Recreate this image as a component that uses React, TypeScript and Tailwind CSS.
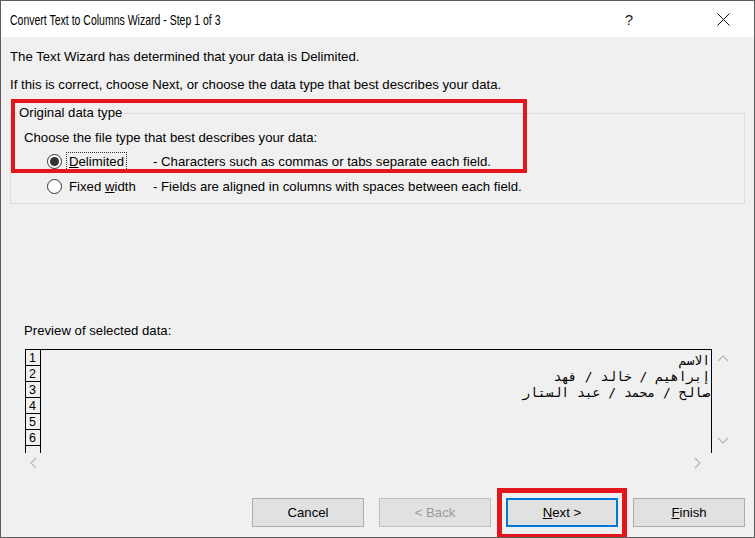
import React from 'react';

const font = { fontFamily: '"Liberation Sans", Arial, sans-serif' };

const Chevron = ({ dir }: { dir: 'up' | 'down' | 'left' | 'right' }) => {
  const pts = {
    up: '1,8 6,3 11,8',
    down: '1,3 6,8 11,3',
    left: '8,1 3,6 8,11',
    right: '3,1 8,6 3,11',
  }[dir];
  return (
    <svg width="12" height="12" viewBox="0 0 12 12">
      <polyline points={pts} fill="none" stroke="#b5b5b5" strokeWidth="1.2" />
    </svg>
  );
};

const Radio = ({ checked }: { checked?: boolean }) => (
  <span className="w-[15px] h-[15px] rounded-full border border-[#333] bg-white flex items-center justify-center shrink-0">
    {checked && <span className="w-[9px] h-[9px] rounded-full bg-[#333]" />}
  </span>
);

const rows = ['الاسم', 'إبراهيم / خالد / فهد', 'صالح / محمد / عبد الستار', '', '', ''];

export default function App() {
  return (
    <div
      className="relative w-[755px] h-[538px] overflow-hidden border border-[#5c5c5c] bg-[#f0f0f0] text-[13.2px] text-black flex flex-col"
      style={font}
    >
      {/* Title bar */}
      <div className="h-[36px] bg-white flex items-center shrink-0">
        <span className="inline-block ml-[9px] text-[15px] leading-none origin-left scale-x-[0.7] whitespace-nowrap">
          Convert Text to Columns Wizard - Step 1 of 3
        </span>
        <span className="ml-auto mr-[84px] text-[15px] leading-none text-[#222]">?</span>
        <svg className="mr-[24px]" width="13" height="13" viewBox="0 0 13 13">
          <path d="M0.5 0.5 L12.5 12.5 M12.5 0.5 L0.5 12.5" stroke="#111" strokeWidth="1" />
        </svg>
      </div>

      {/* Body */}
      <div className="flex-1 flex flex-col px-[9px]">
        <p className="mt-[12px] leading-[16px]">The Text Wizard has determined that your data is Delimited.</p>
        <p className="mt-[12px] leading-[16px]">If this is correct, choose Next, or choose the data type that best describes your data.</p>

        <fieldset className="mt-[12px] border border-[#dcdcdc] pl-[13px] pb-[4px]">
          <legend className="ml-[-7px] px-[2px] leading-[16px]">Original data type</legend>
          <p className="mt-[9px] leading-[16px]">Choose the file type that best describes your data:</p>
          <div className="mt-[3px] h-[25px] flex items-center">
            <span className="ml-[23px]"><Radio checked /></span>
            <span className="ml-[4px] w-[87px]">
              <span className="border border-dotted border-[#333] px-[2px] py-[1px]">
                <span className="underline">D</span>elimited
              </span>
            </span>
            <span>- Characters such as commas or tabs separate each field.</span>
          </div>
          <div className="h-[25px] flex items-center">
            <span className="ml-[23px]"><Radio /></span>
            <span className="ml-[7px] w-[84px]">
              Fixed <span className="underline">w</span>idth
            </span>
            <span>- Fields are aligned in columns with spaces between each field.</span>
          </div>
        </fieldset>

        <p className="mt-[119px] ml-[14px] leading-[16px]">Preview of selected data:</p>

        {/* Preview */}
        <div className="mt-[10px] ml-[15px] flex">
          <div className="w-[687px] flex flex-col">
            <div className="h-[104px] border-t border-x border-black bg-[#f0f0f0] flex overflow-hidden">
              <div className="w-[15px] border-r border-black flex flex-col shrink-0">
                {rows.map((_, i) => (
                  <div key={i} className="h-[16px] border-b border-black text-[12.5px] leading-[15px] pt-[1px] pl-[3px] shrink-0">
                    {i + 1}
                  </div>
                ))}
              </div>
              <div className="flex-1 flex flex-col items-end overflow-hidden pt-[3px] pr-[1px]">
                {rows.map((r, i) => (
                  <div
                    key={i}
                    dir="rtl"
                    className="h-[16px] leading-[16px] text-[13px] whitespace-pre"
                    style={{ fontFamily: '"DejaVu Sans Mono", "DejaVu Sans", monospace' }}
                  >
                    {r}
                  </div>
                ))}
              </div>
            </div>
            <div className="h-[20px] flex items-center justify-between pl-[3px] pr-[8px]">
              <Chevron dir="left" />
              <Chevron dir="right" />
            </div>
          </div>
          <div className="w-[22px] h-[104px] flex flex-col items-center justify-between pt-[4px] pb-[6px]">
            <Chevron dir="up" />
            <Chevron dir="down" />
          </div>
        </div>

        {/* Buttons */}
        <div className="mt-auto mb-[10px] flex justify-end gap-[15px]">
          <button className="w-[112px] h-[29px] bg-[#e1e1e1] border border-[#adadad]">Cancel</button>
          <button className="w-[112px] h-[29px] bg-[#e1e1e1] border border-[#bfbfbf] text-[#9a9a9a]">&lt; Back</button>
          <button className="w-[112px] h-[29px] bg-[#e1e1e1] border-2 border-[#0078d7]">
            <span className="underline">N</span>ext &gt;
          </button>
          <button className="w-[112px] h-[29px] bg-[#e1e1e1] border border-[#adadad]">
            <span className="underline">F</span>inish
          </button>
        </div>
      </div>

      {/* Annotation boxes */}
      <div className="absolute left-[10px] top-[98px] w-[516px] h-[74px] border-4 border-[#e3161e]" />
      <div className="absolute left-[496px] top-[487px] w-[130px] h-[51px] border-[5px] border-[#e3161e]" />
    </div>
  );
}
